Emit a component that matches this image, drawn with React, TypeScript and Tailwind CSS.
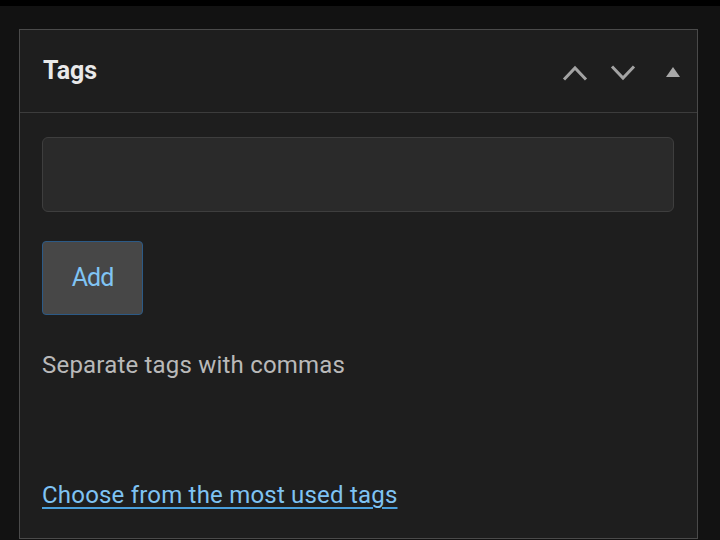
import React from 'react';

function ChevronUp() {
  return (
    <svg width="26" height="16" viewBox="0 0 26 16" fill="none">
      <polyline points="2,14.5 13,3 24,14.5" stroke="#a3a3a3" strokeWidth="3" />
    </svg>
  );
}

function ChevronDown() {
  return (
    <svg width="26" height="16" viewBox="0 0 26 16" fill="none">
      <polyline points="2,1.5 13,13 24,1.5" stroke="#a3a3a3" strokeWidth="3" />
    </svg>
  );
}

function Triangle() {
  return (
    <svg width="14" height="10" viewBox="0 0 14 10">
      <polygon points="7,0 14,10 0,10" fill="#a8a8a8" />
    </svg>
  );
}

export default function App() {
  return (
    <div className="min-h-[540px] bg-[#121212] overflow-hidden" style={{ fontFamily: 'Roboto, "Noto Sans", sans-serif' }}>
      <div className="h-[6px] bg-black" />
      <div className="ml-[19px] mt-[23px] w-[679px] h-[510px] border border-[#4a4a4a] bg-[#1e1e1e] flex flex-col">
        {/* Header */}
        <div className="h-[83px] flex items-center justify-between pl-[23px] pr-[17px] border-b border-[#3c3c3c]">
          <h2 className="text-[25px] font-bold text-[#e9e9e9] leading-none mb-[2px]">Tags</h2>
          <div className="flex items-center mt-[4px]">
            <button className="flex items-center justify-center w-[26px] h-[16px]">
              <ChevronUp />
            </button>
            <button className="ml-[22px] flex items-center justify-center w-[26px] h-[16px]">
              <ChevronDown />
            </button>
            <button className="ml-[30px] flex items-center justify-center w-[14px] h-[10px] mb-[2px]">
              <Triangle />
            </button>
          </div>
        </div>

        {/* Body */}
        <div className="flex flex-col pl-[22px] pr-[23px] pt-[24px]">
          <input
            type="text"
            className="h-[75px] w-full rounded-[6px] border border-[#3e3e3e] bg-[#2a2a2a] outline-none px-3 text-[#e0e0e0] text-[22px]"
          />
          <button className="mt-[29px] w-[101px] h-[74px] rounded-[4px] border border-[#2c5a86] bg-[#474747] text-[#80c4f4] text-[25px] tracking-[-1px]">
            Add
          </button>
          <p className="mt-[35px] text-[24px] leading-[30px] tracking-[0.2px] text-[#b9b9b9]">Separate tags with commas</p>
          <a href="#" className="mt-[100px] text-[24px] leading-[30px] tracking-[0.2px] text-[#7fc3f3] underline underline-offset-[4px] decoration-[#4a9fdb] decoration-[2px] w-fit">
            Choose from the most used tags
          </a>
        </div>
      </div>
    </div>
  );
}
